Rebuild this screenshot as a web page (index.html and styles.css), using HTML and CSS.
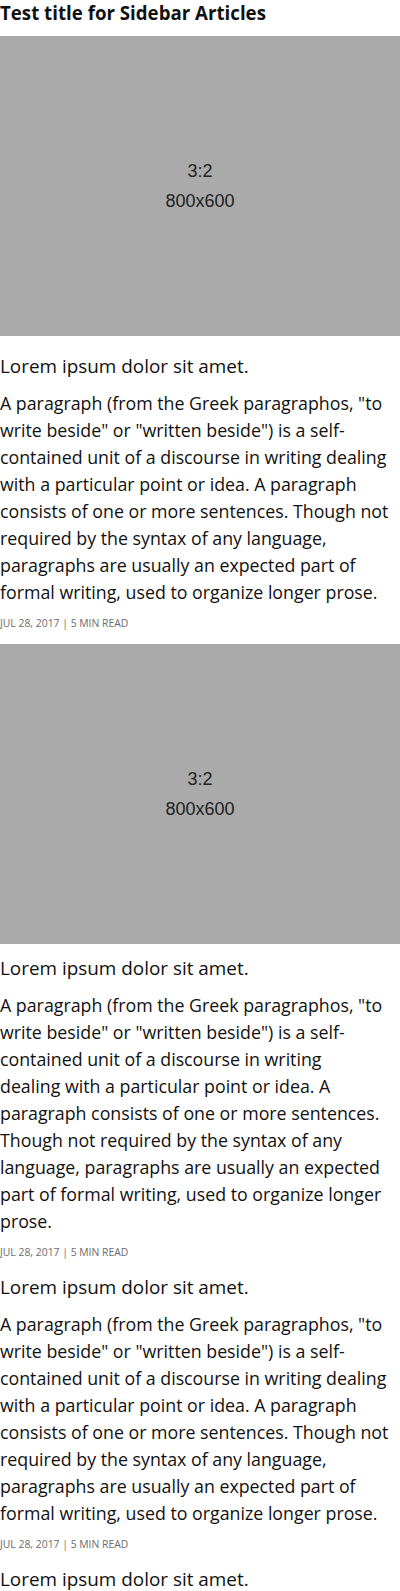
FILE: index.html
```html
<!DOCTYPE html>
<html lang="en">
<head>
    <meta charset="UTF-8">
    <meta name="viewport" content="width=device-width, initial-scale=1.0">
    <title>Sidebar Articles</title>
    <link rel="stylesheet" href="styles.css">
</head>
<body>
    <aside class="sidebar">
        <h3 class="sidebar-title">Test title for Sidebar Articles</h3>

        <article class="post">
            <div class="post-image">
                <span>3:2</span>
                <span>800x600</span>
            </div>
            <h4 class="post-title">Lorem ipsum dolor sit amet.</h4>
            <p class="post-text">A paragraph (from the Greek paragraphos, "to write beside" or "written beside") is a self-contained unit of a discourse in writing dealing with a particular point or idea. A paragraph consists of one or more sentences. Though not required by the syntax of any language, paragraphs are usually an expected part of formal writing, used to organize longer prose.</p>
            <div class="post-meta">Jul 28, 2017 | 5 min read</div>
        </article>

        <article class="post post-compact">
            <div class="post-image">
                <span>3:2</span>
                <span>800x600</span>
            </div>
            <h4 class="post-title">Lorem ipsum dolor sit amet.</h4>
            <p class="post-text">A paragraph (from the Greek paragraphos, "to write beside" or "written beside") is a self-contained unit of a discourse in writing<br>dealing with a particular point or idea. A paragraph consists of one or more sentences. Though not required by the syntax of any language, paragraphs are usually an expected part of formal writing, used to organize longer prose.</p>
            <div class="post-meta">Jul 28, 2017 | 5 min read</div>
        </article>

        <article class="post">
            <h4 class="post-title">Lorem ipsum dolor sit amet.</h4>
            <p class="post-text">A paragraph (from the Greek paragraphos, "to write beside" or "written beside") is a self-contained unit of a discourse in writing dealing with a particular point or idea. A paragraph consists of one or more sentences. Though not required by the syntax of any language, paragraphs are usually an expected part of formal writing, used to organize longer prose.</p>
            <div class="post-meta">Jul 28, 2017 | 5 min read</div>
        </article>

        <article class="post">
            <h4 class="post-title">Lorem ipsum dolor sit amet.</h4>
            <p class="post-text">A paragraph (from the Greek paragraphos, "to write beside" or "written beside") is a self-contained unit of a discourse in writing dealing with a particular point or idea.</p>
            <div class="post-meta">Jul 28, 2017 | 5 min read</div>
        </article>
    </aside>
</body>
</html>
```

FILE: styles.css
```css
/* sidebar articles */
body {
    margin: 0;
    font-family: "Open Sans", "Noto Sans", sans-serif;
    color: #111;
    background: #fff;
}

.sidebar {
    width: 400px;
}

.sidebar-title {
    margin: 0 0 10px;
    font-size: 18.7px;
    font-weight: 700;
    line-height: 26px;
}

.post {
    margin-bottom: 13px;
}

.post-image {
    height: 300px;
    background-color: #aaa;
    color: #222;
    font-family: "Liberation Sans", Arial, sans-serif;
    font-size: 18px;
    line-height: 30px;
    display: flex;
    flex-direction: column;
    align-items: center;
    justify-content: center;
}

.post-title {
    margin: 14px 0 0;
    font-size: 18.9px;
    font-weight: 400;
    line-height: 26px;
}

.post-image + .post-title {
    margin-top: 17px;
}

.post-compact .post-image + .post-title {
    margin-top: 11px;
}

.post-text {
    margin: 11px 0 0;
    font-size: 17.8px;
    line-height: 27px;
}

.post-meta {
    margin-top: 9px;
    font-size: 10.4px;
    line-height: 16px;
    color: #6b6b6b;
    text-transform: uppercase;
}
```
